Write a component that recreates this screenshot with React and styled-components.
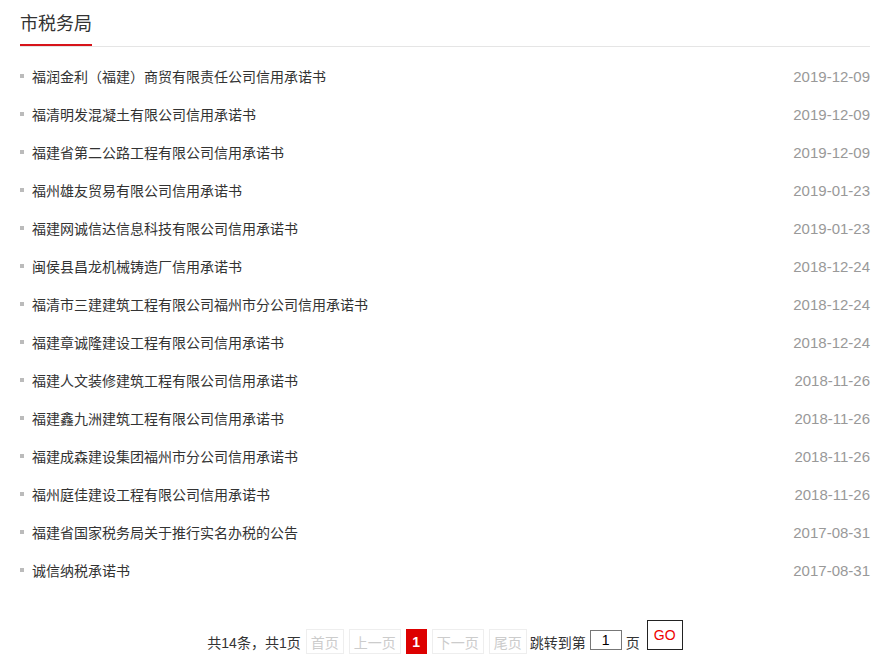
import React from "react";
import styled, { createGlobalStyle } from "styled-components";

const GlobalStyle = createGlobalStyle`
  body {
    margin: 0;
    background: #fff;
    font-family: "Liberation Sans", "Noto Sans CJK SC", sans-serif;
  }
`;

const Page = styled.div`
  padding: 0 26px 0 20px;
`;

const Header = styled.div`
  display: flex;
  align-items: flex-end;
  border-bottom: 1px solid #e5e5e5;
`;

const Title = styled.h2`
  margin: 0;
  padding: 12px 0 8px;
  width: 72px;
  font-size: 18px;
  line-height: 24px;
  font-weight: normal;
  color: #333;
  border-bottom: 2px solid #d7141a;
  white-space: nowrap;
`;

const List = styled.ul`
  list-style: none;
  margin: 0;
  padding: 10px 0 0;
`;

const Row = styled.li`
  display: flex;
  align-items: center;
  justify-content: space-between;
  height: 38px;
`;

const Name = styled.a`
  display: flex;
  align-items: center;
  gap: 8px;
  font-size: 14px;
  color: #333;
  text-decoration: none;
  &::before {
    content: "";
    width: 4px;
    height: 4px;
    background: #bbb;
  }
`;

const Date = styled.span`
  font-size: 15px;
  color: #999;
`;

const Pager = styled.div`
  display: flex;
  justify-content: center;
  align-items: center;
  gap: 5px;
  margin-top: 40px;
  font-size: 14px;
  color: #333;
`;

const PageBtn = styled.span`
  box-sizing: border-box;
  display: inline-flex;
  align-items: center;
  justify-content: center;
  height: 25px;
  min-width: 21px;
  padding: 0 ${(p) => (p.$active ? "5px" : "4px")};
  border: 1px solid ${(p) => (p.$active ? "#d00" : "#eee")};
  background: ${(p) => (p.$active ? "#d00" : "#fff")};
  color: ${(p) => (p.$active ? "#fff" : "#ccc")};
  font-weight: ${(p) => (p.$active ? "bold" : "normal")};
`;

const Jump = styled.span`
  display: inline-flex;
  align-items: center;
  gap: 4px;
  margin-left: -2px;
`;

const PageInput = styled.input`
  box-sizing: border-box;
  width: 32px;
  height: 20px;
  margin-top: -3px;
  border: 1px solid #777;
  text-align: center;
  font-family: inherit;
  font-size: 14px;
  padding: 0;
`;

const GoBtn = styled.button`
  box-sizing: border-box;
  width: 36px;
  height: 30px;
  margin: -13px 0 0 2px;
  border: 1px solid #222;
  background: #fff;
  color: #e00;
  font-family: inherit;
  font-size: 14px;
  padding: 0;
`;

const items = [
  ["福润金利（福建）商贸有限责任公司信用承诺书", "2019-12-09"],
  ["福清明发混凝土有限公司信用承诺书", "2019-12-09"],
  ["福建省第二公路工程有限公司信用承诺书", "2019-12-09"],
  ["福州雄友贸易有限公司信用承诺书", "2019-01-23"],
  ["福建网诚信达信息科技有限公司信用承诺书", "2019-01-23"],
  ["闽侯县昌龙机械铸造厂信用承诺书", "2018-12-24"],
  ["福清市三建建筑工程有限公司福州市分公司信用承诺书", "2018-12-24"],
  ["福建章诚隆建设工程有限公司信用承诺书", "2018-12-24"],
  ["福建人文装修建筑工程有限公司信用承诺书", "2018-11-26"],
  ["福建鑫九洲建筑工程有限公司信用承诺书", "2018-11-26"],
  ["福建成森建设集团福州市分公司信用承诺书", "2018-11-26"],
  ["福州庭佳建设工程有限公司信用承诺书", "2018-11-26"],
  ["福建省国家税务局关于推行实名办税的公告", "2017-08-31"],
  ["诚信纳税承诺书", "2017-08-31"],
];

const App = () => {
  return (
    <Page>
      <GlobalStyle />
      <Header>
        <Title>市税务局</Title>
      </Header>
      <List>
        {items.map(([name, date]) => (
          <Row key={name}>
            <Name href="#">{name}</Name>
            <Date>{date}</Date>
          </Row>
        ))}
      </List>
      <Pager>
        <span>共14条，共1页</span>
        <PageBtn>首页</PageBtn>
        <PageBtn>上一页</PageBtn>
        <PageBtn $active>1</PageBtn>
        <PageBtn>下一页</PageBtn>
        <PageBtn>尾页</PageBtn>
        <Jump>
          跳转到第 <PageInput defaultValue="1" /> 页
        </Jump>
        <GoBtn>GO</GoBtn>
      </Pager>
    </Page>
  );
};

export default App;
